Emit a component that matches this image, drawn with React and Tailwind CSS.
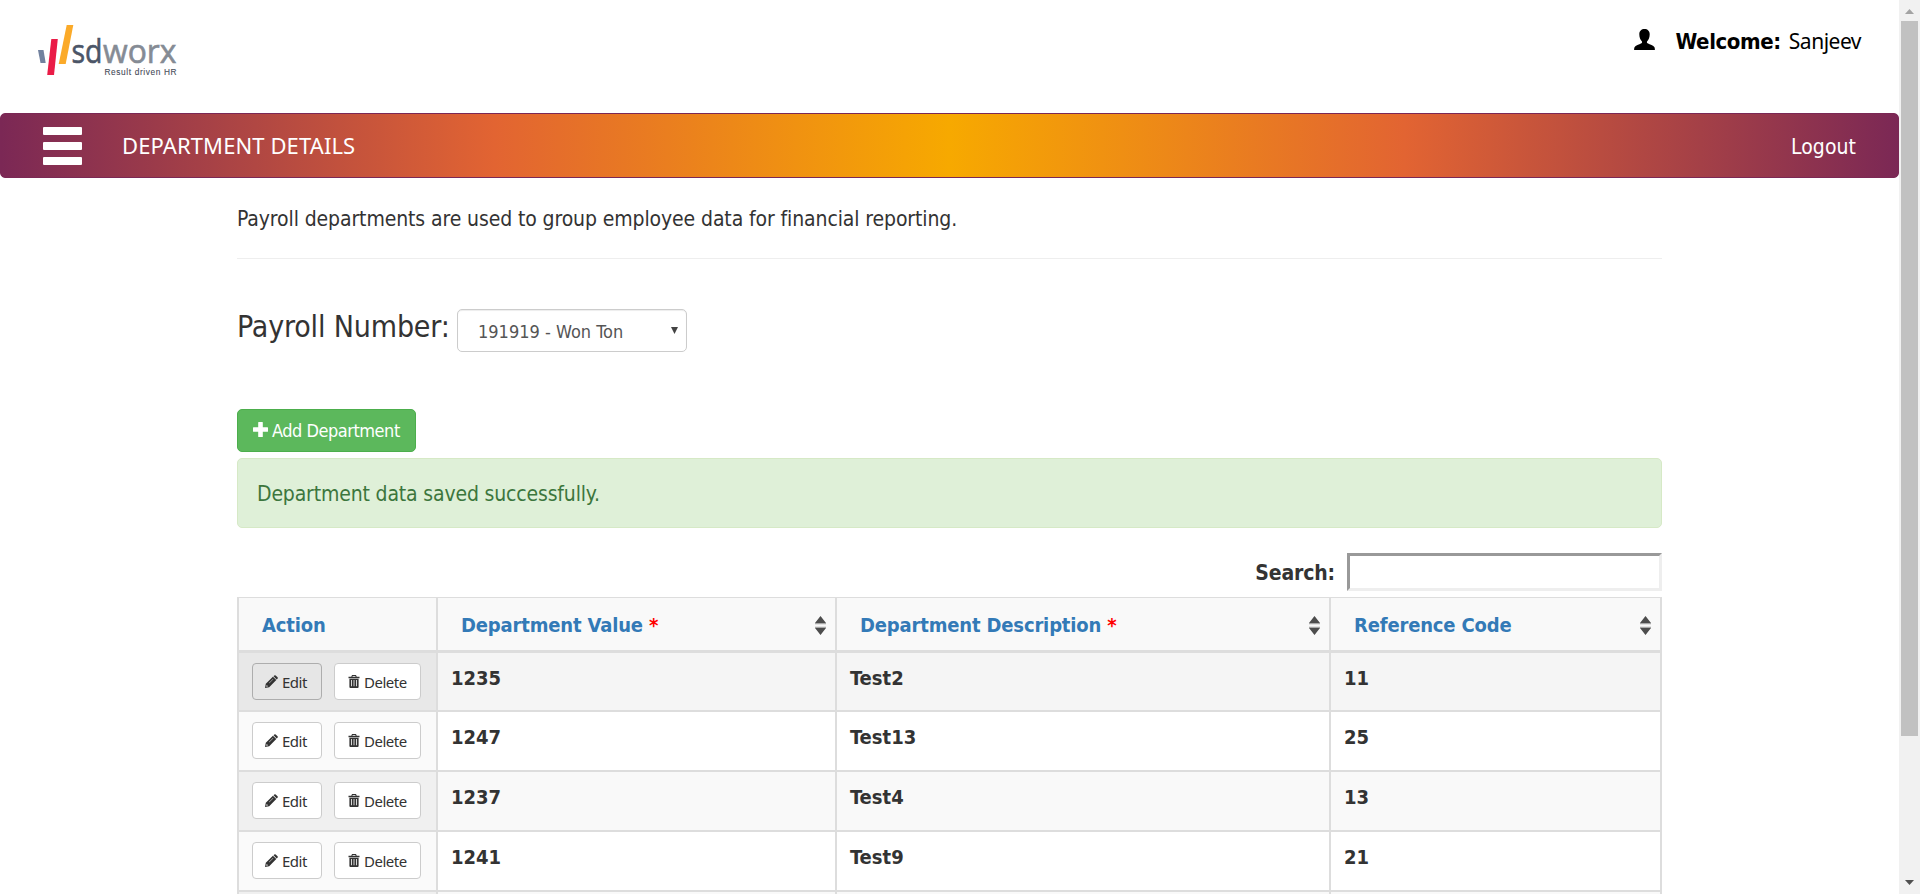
import React from 'react';

const rows = [
  { value: '1235', desc: 'Test2', code: '11', h: 'h-[59px]', bg: 'bg-[#f5f5f5]', first: 'bg-[#e8e8e8]', active: true },
  { value: '1247', desc: 'Test13', code: '25', h: 'h-[60px]', bg: 'bg-white', first: 'bg-[#fafafa]' },
  { value: '1237', desc: 'Test4', code: '13', h: 'h-[60px]', bg: 'bg-[#f9f9f9]', first: 'bg-[#f0f0f0]' },
  { value: '1241', desc: 'Test9', code: '21', h: 'h-[60px]', bg: 'bg-white', first: 'bg-[#fafafa]' },
];

function Logo() {
  return (
    <svg className="block" width="150" height="60" viewBox="30 20 150 60">
      <path d="M38 50h5.500l2.200 13h-5.200z" fill="#72829f" />
      <path d="M51.3 39h6.5L54 75h-6.8z" fill="#ea1c47" />
      <path d="M66.7 25h6.6l-7.6 39h-7z" fill="#fbaa29" />
      <g fontFamily="'Open Sans', 'Noto Sans', sans-serif" fontSize="33">
        <text x="71.5" y="63" textLength="31" lengthAdjust="spacingAndGlyphs" fill="#4b5567" stroke="#4b5567" strokeWidth="0.6">sd</text>
        <text x="103" y="63" textLength="73.5" lengthAdjust="spacingAndGlyphs" fill="#858b94" stroke="#858b94" strokeWidth="0.6">worx</text>
      </g>
      <text x="104.5" y="75" textLength="72" fontFamily="'Liberation Sans', sans-serif" fontSize="8.3" fill="#454b58" stroke="#454b58" strokeWidth="0.1">Result driven HR</text>
    </svg>
  );
}

function UserIcon() {
  return (
    <svg className="block" width="21" height="21" viewBox="0 0 21 21" fill="#000">
      <path d="M10.5 0C7.4 0 5.3 2 5.3 5.2c0 3.400 1.100 5.500 2.500 7 .5.6.4 1.700-.4 2.100C5 15.500 1.500 16.600.5 18.300c-.3.6-.4 1.500-.4 2.700h20.800c0-1.200-.1-2.100-.4-2.700-1-1.700-4.500-2.800-6.900-4-.8-.4-.9-1.500-.4-2.100 1.400-1.500 2.500-3.600 2.500-7C15.700 2 13.600 0 10.500 0z" />
    </svg>
  );
}

function PencilIcon() {
  return (
    <svg className="block" width="13" height="13" viewBox="0 0 13 13" fill="#333">
      <path d="M9.300.5a1 1 0 0 1 1.400 0l1.800 1.800a1 1 0 0 1 0 1.400l-.8.8-3.200-3.200z" />
      <path fillRule="evenodd" d="M7.900 1.700l3.400 3.400-7.100 7.100L0 13l.8-4.200zM1.700 9.900l-.5 1.900 1.900-.5zM8 4L4 8l.3.3 4-4z" />
    </svg>
  );
}

function TrashIcon() {
  return (
    <svg className="block" width="12" height="13" viewBox="0 0 12 13" fill="#333">
      <path fillRule="evenodd" d="M4 0h4l.7 1.700H11.500V3.200H.5V1.700h2.800zm.7.900l-.3.8h3.200l-.3-.8z" />
      <path fillRule="evenodd" d="M1.400 3.700h9.200V12a1 1 0 0 1-1 1H2.400a1 1 0 0 1-1-1zM3.100 5v6.300h.8V5zm2.500 0v6.300h.8V5zm2.500 0v6.300h.8V5z" />
    </svg>
  );
}

function SortIcon() {
  return (
    <svg className="block" width="11" height="19" viewBox="0 0 11 19">
      <path d="M5.500 0L11 7H0zM0 12h11l-5.500 7z" fill="#4d4d4d" />
      <path d="M0 7h11v1.200H0zM0 10.800h11V12H0z" fill="#a8a8a8" />
    </svg>
  );
}

function HeadCell({ width, label, required, sortable }) {
  return (
    <div className={`${width} flex items-center justify-between border-r-2 border-[#ddd] pl-[23px] pr-[9px] pt-0.5`}>
      <span className="text-[20px] font-bold leading-7 tracking-[-0.16px] text-[#337ab7]">
        {label}
        {required && <span className="text-[#f00]"> *</span>}
      </span>
      {sortable && <SortIcon />}
    </div>
  );
}

function RowButton({ width, active, icon, children }) {
  return (
    <button
      className={`${width} flex h-[37px] items-center rounded-[4px] border pl-3 text-[#333] ${
        active ? 'border-[#adadad] bg-[#e6e6e6]' : 'border-[#ccc] bg-white'
      }`}
    >
      {icon}
      <span className="ml-[4px] font-['Noto_Sans',sans-serif] text-[15px] leading-5 tracking-[-0.5px]">{children}</span>
    </button>
  );
}

function DataCell({ width, children }) {
  return (
    <div className={`${width} border-r-2 border-[#ddd] pl-[13px] pt-[11px] text-[20px] font-bold leading-7 text-[#333]`}>
      {children}
    </div>
  );
}

export default function App() {
  return (
    <div className="flex h-[894px] w-[1920px] overflow-hidden bg-white font-['DejaVu_Sans_Condensed','Noto_Sans',sans-serif] text-[#333]">
      <main className="w-[1899px] shrink-0">
        <header className="flex h-[113px] items-start justify-between pl-[30px] pr-[38px] pt-5">
          <Logo />
          <div className="flex items-center pt-[7px] text-[22px] leading-7 text-black">
            <div className="mr-[20px] -mt-[4px]"><UserIcon /></div>
            <div className="flex items-baseline">
              <b className="mr-[8px] tracking-[-0.4px]">Welcome:</b>
              <span className="font-['Noto_Sans',sans-serif] text-[21px] tracking-[-0.5px]">Sanjeev</span>
            </div>
          </div>
        </header>

        <nav className="flex h-[65px] items-center justify-between rounded-[5px] border border-[#7b2855] bg-[linear-gradient(to_right,#7b2855_0%,#e26432_26%,#f7a900_50%,#e26432_74%,#7b2855_100%)] pl-[42px] pr-[42px] text-white">
          <div className="flex items-center">
            <div className="flex flex-col gap-[7px] pt-px">
              <span className="h-[8px] w-[39px] rounded-[1px] bg-white" />
              <span className="h-[8px] w-[39px] rounded-[1px] bg-white" />
              <span className="h-[8px] w-[39px] rounded-[1px] bg-white" />
            </div>
            <span className="mt-[-2px] ml-[40px] font-['Noto_Sans',sans-serif] text-[22px] leading-7 tracking-[0.1px]">DEPARTMENT DETAILS</span>
          </div>
          <span className="pt-0.5 text-[21px] leading-7 tracking-[0.05px]">Logout</span>
        </nav>

        <section className="ml-[237px] w-[1425px]">
          <p className="h-[80px] pt-[27px] text-[21px] leading-7 tracking-[-0.11px]">
            Payroll departments are used to group employee data for financial reporting.
          </p>
          <div className="h-px bg-[#eee]" />

          <div className="flex pt-[50px]">
            <span className="w-[220px] whitespace-nowrap pt-px text-[30px] leading-[34px] tracking-[-0.15px]">Payroll Number:</span>
            <div className="flex h-[43px] w-[230px] items-center justify-between rounded-[5px] border border-[#ccc] bg-white pl-[20px] pr-2 text-[18px] text-[#555] shadow-[inset_0_1px_1px_rgba(0,0,0,0.075)]">
              <span className="pt-0.5 leading-6">191919 - Won Ton</span>
              <svg className="block" width="7" height="7" viewBox="0 0 7 7"><path d="M0 0h7L3.500 7z" fill="#444" /></svg>
            </div>
          </div>

          <button className="mt-[57px] flex h-[43px] w-[179px] items-center rounded-[5px] border border-[#4cae4c] bg-[#5cb85c] pl-[15px] text-[18px] tracking-[-0.48px] text-white">
            <svg className="mr-1 mt-[-2px] block" width="15" height="15" viewBox="0 0 15 15" fill="#fff">
              <path d="M5.700 0h3.600a.5.5 0 0 1 .5.5v4.700h4.700a.5.5 0 0 1 .5.5v3.600a.5.5 0 0 1-.5.5H9.800v4.700a.5.5 0 0 1-.5.5H5.700a.5.5 0 0 1-.5-.5V9.800H.5a.5.5 0 0 1-.5-.5V5.700a.5.5 0 0 1 .5-.5h4.700V.5a.5.5 0 0 1 .5-.5z" />
            </svg>
            Add Department
          </button>

          <div className="mt-[6px] flex h-[70px] items-center rounded-[5px] border border-[#d6e9c6] bg-[#dff0d8] pl-[19px] pt-px text-[21px] leading-7 tracking-[-0.16px] text-[#3c763d]">
            Department data saved successfully.
          </div>

          <div className="mt-[25px] flex items-center justify-end">
            <label htmlFor="search" className="mr-[12px] pt-px text-[21px] font-bold leading-7 tracking-[-0.15px]">Search:</label>
            <input
              id="search"
              className="h-[38px] w-[315px] border-[3px] border-b-[#eee] border-l-[#999] border-r-[#eee] border-t-[#999] bg-white outline-none"
            />
          </div>

          <div className="mt-[6px] border-l-2 border-t border-l-[#ddd] border-t-[#ddd]">
            <div className="flex h-[55px] border-b-[3px] border-[#ddd] bg-[#f9f9f9]">
              <HeadCell width="w-[199px]" label="Action" />
              <HeadCell width="w-[399px]" label="Department Value" required sortable />
              <HeadCell width="w-[494px]" label="Department Description" required sortable />
              <HeadCell width="w-[331px]" label="Reference Code" sortable />
            </div>
            {rows.map((r) => (
              <div key={r.value} className={`flex border-b-2 border-[#ddd] ${r.h} ${r.bg}`}>
                <div className={`flex w-[199px] gap-3 border-r-2 border-[#ddd] pl-[13px] pt-[10px] ${r.first}`}>
                  <RowButton width="w-[70px]" active={r.active} icon={<PencilIcon />}>Edit</RowButton>
                  <RowButton width="w-[87px]" icon={<span className="ml-px"><TrashIcon /></span>}>Delete</RowButton>
                </div>
                <DataCell width="w-[399px]">{r.value}</DataCell>
                <DataCell width="w-[494px]">{r.desc}</DataCell>
                <DataCell width="w-[331px]">{r.code}</DataCell>
              </div>
            ))}
            <div className="flex h-0.5 bg-[#f9f9f9]">
              <div className="w-[199px] border-r-2 border-[#ddd] bg-[#f0f0f0]" />
              <div className="w-[399px] border-r-2 border-[#ddd]" />
              <div className="w-[494px] border-r-2 border-[#ddd]" />
              <div className="w-[331px] border-r-2 border-[#ddd]" />
            </div>
          </div>
        </section>
      </main>

      <aside className="flex w-[21px] shrink-0 flex-col items-center bg-[#f1f1f1]">
        <svg className="block shrink-0" width="21" height="21" viewBox="0 0 21 21"><path d="M6 14h9l-4.500-5z" fill="#a3a3a3" /></svg>
        <div className="h-[715px] w-[17px] shrink-0 bg-[#c1c1c1]" />
        <svg className="mt-auto block shrink-0" width="21" height="21" viewBox="0 0 21 21"><path d="M6 7h9l-4.500 5z" fill="#505050" /></svg>
      </aside>
    </div>
  );
}
